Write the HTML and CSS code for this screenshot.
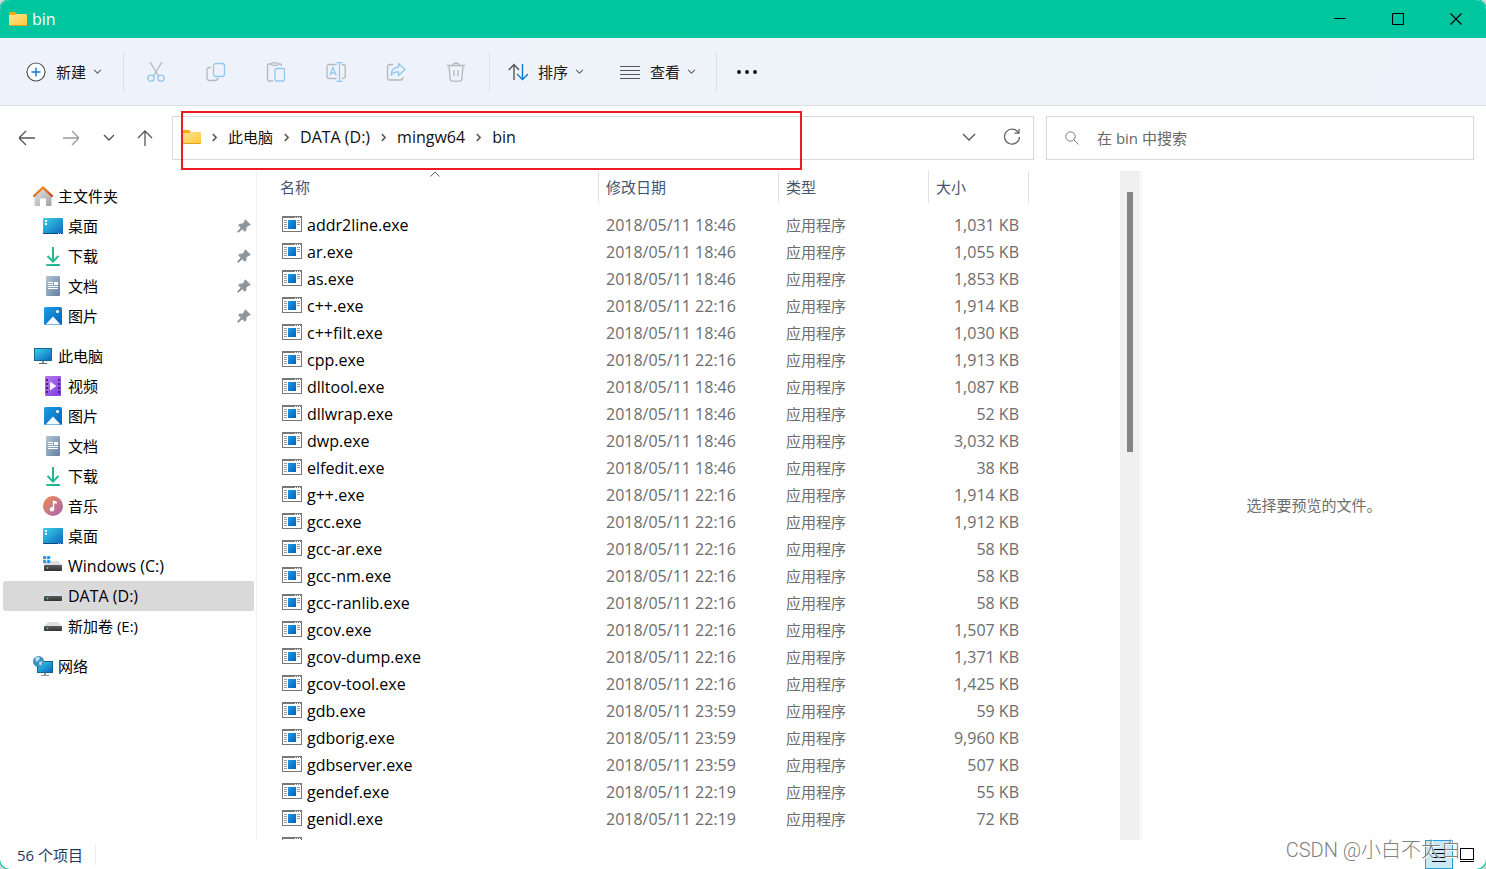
FILE: index.html
```html
<!DOCTYPE html>
<html lang="zh-CN">
<head>
<meta charset="utf-8">
<title>bin</title>
<link rel="stylesheet" href="styles.css">
</head>
<body>
<svg class="defs" width="0" height="0" aria-hidden="true">
  <defs>
    <linearGradient id="gFolder" x1="0" y1="0" x2="1" y2="1"><stop offset="0" stop-color="#ffe394"/><stop offset="1" stop-color="#ffc937"/></linearGradient>
    <linearGradient id="gDesk" x1="0" y1="0" x2="1" y2="1"><stop offset="0" stop-color="#37d3e6"/><stop offset="1" stop-color="#0b67c2"/></linearGradient>
    <linearGradient id="gPic" x1="0" y1="0" x2="1" y2="1"><stop offset="0" stop-color="#1ba0e6"/><stop offset="1" stop-color="#0560b8"/></linearGradient>
    <linearGradient id="gDoc" x1="0" y1="0" x2="1" y2="1"><stop offset="0" stop-color="#b3c5d9"/><stop offset="1" stop-color="#64819f"/></linearGradient>
    <linearGradient id="gDown" x1="0" y1="0" x2="1" y2="1"><stop offset="0" stop-color="#35d08a"/><stop offset="1" stop-color="#0b9aa0"/></linearGradient>
    <linearGradient id="gVid" x1="0" y1="0" x2="1" y2="1"><stop offset="0" stop-color="#b678f2"/><stop offset="1" stop-color="#7a3be0"/></linearGradient>
    <linearGradient id="gMus" x1="0" y1="0" x2="1" y2="1"><stop offset="0" stop-color="#f08a4e"/><stop offset="1" stop-color="#a566b5"/></linearGradient>
    <linearGradient id="gRoof" x1="0" y1="0" x2="1" y2="1"><stop offset="0" stop-color="#f79a1c"/><stop offset="1" stop-color="#cf4310"/></linearGradient>
    <linearGradient id="gWall" x1="0" y1="0" x2="1" y2="1"><stop offset="0" stop-color="#e6e6e6"/><stop offset="1" stop-color="#a2a2a2"/></linearGradient>
    <linearGradient id="gExe" x1="0" y1="0" x2="1" y2="1"><stop offset="0" stop-color="#1c9be6"/><stop offset="1" stop-color="#0560b8"/></linearGradient>
    <linearGradient id="gDrive" x1="0" y1="0" x2="0" y2="1"><stop offset="0" stop-color="#5c5c5c"/><stop offset="1" stop-color="#333"/></linearGradient>
  </defs>
  <symbol id="folder" viewBox="0 0 18 14"><path d="M0 1q0-1 1-1h5l2 2h-1v3H0z" fill="#f5ac12"/><path d="M0 3h6l1.500-1H17q1 0 1 1v10q0 1-1 1H1q-1 0-1-1z" fill="url(#gFolder)"/><path d="M0 13h18q0 1-1 1H1q-1 0-1-1z" fill="#e8a01c"/></symbol>
  <symbol id="home" viewBox="0 0 20 20"><path d="M1.500 10L10 2l8.500 8v9q0 1-1 1H13v-7.500H7V20H2.500q-1 0-1-1z" fill="url(#gWall)"/><path d="M1 10l9-8.500 9 8.500" fill="none" stroke="url(#gRoof)" stroke-width="2.400" stroke-linecap="round" stroke-linejoin="round"/></symbol>
  <symbol id="desktop" viewBox="0 0 20 20"><rect y="2" width="20" height="16" rx="1" fill="url(#gDesk)"/><path d="M0 17h20q0 1-1 1H1q-1 0-1-1z" fill="#0a4a86"/><path d="M2 4h2v2H2zM2 7h2v2H2z" fill="#fff"/><path d="M15 17h1v1h-1zM17 17h1v1h-1z" fill="#8fc4ee"/></symbol>
  <symbol id="download" viewBox="0 0 20 20"><path d="M10 1v14M4.500 10l5.500 5.500 5.500-5.500" fill="none" stroke="#24b894" stroke-width="2"/><rect x="3" y="18" width="14" height="2" rx="1" fill="url(#gDown)"/></symbol>
  <symbol id="doc" viewBox="0 0 20 20"><rect x="3" width="14" height="20" rx="1" fill="url(#gDoc)"/><path d="M5 6.500h5M5 8.500h5M5 10.500h10M5 12.500h10" stroke="#fff"/><path d="M11 6h4v3h-4z" fill="#fff"/></symbol>
  <symbol id="picture" viewBox="0 0 20 20"><rect x="1" y="1" width="18" height="18" rx="1.500" fill="url(#gPic)"/><path d="M2.500 18.500L10 10.500l7.500 8z" fill="#f3f9ff"/><circle cx="14.500" cy="5.500" r="1.600" fill="#fff"/></symbol>
  <symbol id="video" viewBox="0 0 20 20"><rect x="2" width="16" height="20" rx="1" fill="url(#gVid)"/><path d="M3 3h2v2H3zM3 7h2v2H3zM3 11h2v2H3zM3 15h2v2H3zM15 3h2v2h-2zM15 7h2v2h-2zM15 11h2v2h-2zM15 15h2v2h-2z" fill="#45247f"/><path d="M7 5.500L13.500 10 7 14.500z" fill="#f4ecff"/></symbol>
  <symbol id="music" viewBox="0 0 20 20"><circle cx="10" cy="10" r="10" fill="url(#gMus)"/><path d="M9.800 12.800V4.500l4 1v2.300l-2.600-.6v5.900z" fill="#fff"/><circle cx="9" cy="13.300" r="2.300" fill="#fff"/></symbol>
  <symbol id="pc" viewBox="0 0 20 20"><rect x="1" y="2" width="18" height="13" fill="#17649a"/><rect x="2" y="3" width="16" height="11" fill="url(#gDesk)"/><path d="M9 15h2v2H9z" fill="#8a949e"/><path d="M6 17h8v1H6z" fill="#5d6771"/></symbol>
  <symbol id="drive" viewBox="0 0 20 20"><path d="M1 10l4-4h10l4 4z" fill="#dcdfe3"/><rect x="1" y="10" width="18" height="5" rx=".8" fill="url(#gDrive)"/><circle cx="4.500" cy="12.500" r=".9" fill="#35e04e"/></symbol>
  <symbol id="windrive" viewBox="0 0 20 20"><path d="M1 9l4-4h10l4 4z" fill="#dcdfe3"/><rect x="1" y="9" width="18" height="6" rx=".8" fill="url(#gDrive)"/><circle cx="4.500" cy="12" r=".9" fill="#35e04e"/><path d="M0 0h3.300v3.300H0zM4 0h3.300v3.300H4zM0 4h3.300v3.300H0zM4 4h3.300v3.300H4z" fill="#1592e2" stroke="#fff" stroke-width=".3"/></symbol>
  <symbol id="network" viewBox="0 0 20 20"><rect x="4" y="5" width="16" height="12" fill="#17649a"/><rect x="5" y="6" width="14" height="10" fill="url(#gDesk)"/><path d="M11 17h2v2h-2z" fill="#8a949e"/><path d="M8 19h8v1H8z" fill="#8a949e"/><circle cx="5.500" cy="5.500" r="5.500" fill="#3b92bf"/><path d="M2 2q3-2.500 5 0l-1 2-3 2zM6 6l3.500-1-1 4-2 .5z" fill="#b9dcea"/></symbol>
  <symbol id="pin" viewBox="0 0 14 14"><path d="M8.300.8l4.900 4.900-1.400.8-.6-.1-2.300 2.300.1 2.600-1.200 1L5.200 9.700 1.700 13l-.9.100.1-.9 3.400-3.400L1.600 6.200l1.100-1.100 2.600.1 2.300-2.300-.1-.7z" fill="#8d959d" stroke="#8d959d" stroke-linejoin="round"/></symbol>
  <symbol id="exe" viewBox="0 0 20 16"><rect x=".5" y=".5" width="19" height="15" fill="#fff" stroke="#777"/><path d="M0 0h20v2H0z" fill="#777"/><path d="M13 1.500h1M15 1.500h1M17 1.500h1" stroke="#fff"/><path d="M2 4.500h3M2 6.500h3M2 8.500h3M2 10.500h3M2 12.500h3M15 4.500h3M15 6.500h3M15 8.500h3" stroke="#999"/><rect x="6" y="4" width="8" height="9" fill="url(#gExe)"/></symbol>
  <symbol id="chev" viewBox="0 0 8 8"><path d="M1 2.500l3 3 3-3" fill="none" stroke="#666"/></symbol>
  <symbol id="sep" viewBox="0 0 8 8"><path d="M2.500 1l3 3-3 3" fill="none" stroke="#555" stroke-width="1.300"/></symbol>
</svg>

<div class="window">
  <header class="titlebar">
    <svg class="folder"><use href="#folder"/></svg>
    <h1 class="title">bin</h1>
    <button class="winbtn" aria-label="最小化"><svg width="12" height="12"><path d="M0 5.500h12" stroke="#000"/></svg></button>
    <button class="winbtn" aria-label="最大化"><svg width="12" height="12"><rect x=".5" y=".5" width="11" height="11" rx="1" fill="none" stroke="#000" stroke-width="1.200"/></svg></button>
    <button class="winbtn" aria-label="关闭"><svg width="12" height="12"><path d="M.5.5l11 11M11.500.5l-11 11" stroke="#000" stroke-width="1.200"/></svg></button>
  </header>

  <div class="toolbar">
    <button class="tool new"><svg width="20" height="20" fill="none"><circle cx="10" cy="10" r="9" fill="#fff" stroke="#555" stroke-width="1.200"/><path d="M10 5.500v9M5.500 10h9" stroke="#0a78d4" stroke-width="1.400"/></svg>新建<svg class="chev"><use href="#chev"/></svg></button>
    <span class="divider"></span>
    <div class="actions">
      <button class="act" aria-label="剪切"><svg width="20" height="20" fill="none"><path d="M4 0l8.500 14M16 0L7.500 14" stroke="#b5b8bc" stroke-width="1.300"/><circle cx="5" cy="16.200" r="3.100" stroke="#93c8ee" stroke-width="1.300"/><circle cx="15" cy="16.200" r="3.100" stroke="#93c8ee" stroke-width="1.300"/></svg></button>
      <button class="act" aria-label="复制"><svg width="20" height="20" fill="none"><path d="M5 5.500H3.500q-2.500 0-2.500 3V16q0 2.500 2.500 2.500H9q2.500 0 3-2.500" stroke="#b5b8bc" stroke-width="1.300"/><rect x="7.500" y="1.500" width="11" height="13" rx="2.500" stroke="#93c8ee" stroke-width="1.300"/></svg></button>
      <button class="act" aria-label="粘贴"><svg width="20" height="20" fill="none"><path d="M5 2H3Q1.500 2 1.500 3.500v14Q1.500 19 3 19h4M12 2h2q1.500 0 1.500 1.500V4" stroke="#b5b8bc" stroke-width="1.300"/><rect x="5.500" y=".8" width="6.500" height="2.500" rx="1.200" stroke="#b5b8bc" stroke-width="1.200"/><rect x="9" y="6.500" width="9.500" height="12.500" rx="1.500" stroke="#93c8ee" stroke-width="1.300"/></svg></button>
      <button class="act" aria-label="重命名"><svg width="20" height="20" fill="none"><path d="M10.500 2.500H3.500Q1 2.500 1 5v9q0 2.500 2.500 2.500h7M16 2.500q3.300 0 3.300 2.500v9q0 2.500-3.300 2.500" stroke="#b5b8bc" stroke-width="1.300"/><path d="M3.800 13.500L7 5.500l3.200 8M4.800 11h4.400M13.500.6v18.800M10.500.6h6M10.500 19.400h6" stroke="#93c8ee" stroke-width="1.300"/></svg></button>
      <button class="act" aria-label="共享"><svg width="20" height="20" fill="none"><path d="M7 2.500H4Q1.500 2.500 1.500 5v10.500Q1.500 18 4 18h10.500q2.500 0 2.500-3" stroke="#b5b8bc" stroke-width="1.300"/><path d="M12.500 1.500l6.500 6-6.500 6V10Q7.500 9.500 5 13q.5-7.500 7.500-8z" stroke="#93c8ee" stroke-width="1.300" stroke-linejoin="round"/></svg></button>
      <button class="act" aria-label="删除"><svg width="20" height="20" fill="none"><path d="M1 3.500h18M7 3.500Q7.200 1 10 1t3 2.500M3 3.500l1.200 14q.2 1.700 2 1.700h7.600q1.800 0 2-1.700L17 3.500M8 8v6.500M12 8v6.500" stroke="#b5b8bc" stroke-width="1.300"/></svg></button>
    </div>
    <span class="divider"></span>
    <button class="tool sort"><svg width="20" height="20" fill="none"><path d="M6 18V2.500M.7 8L6 2.500 11 8" stroke="#555" stroke-width="1.400"/><path d="M14.500 2v15.500M9 12l5.500 5.500L20 12" stroke="#0a78d4" stroke-width="1.400"/></svg>排序<svg class="chev"><use href="#chev"/></svg></button>
    <button class="tool view"><svg width="20" height="20"><path d="M0 4.500h20M0 8.500h20M0 12.500h20M0 16.500h20" stroke="#555"/></svg>查看<svg class="chev"><use href="#chev"/></svg></button>
    <span class="divider"></span>
    <button class="more" aria-label="更多"><svg width="20" height="4"><circle cx="2" cy="2" r="1.900"/><circle cx="10" cy="2" r="1.900"/><circle cx="18" cy="2" r="1.900"/></svg></button>
  </div>

  <nav class="navrow" aria-label="地址">
    <div class="history">
      <button class="nav back" aria-label="后退"><svg width="16" height="16" fill="none"><path d="M0 8h16M7 1L0 8l7 7" stroke="#555" stroke-width="1.300"/></svg></button>
      <button class="nav forward" aria-label="前进"><svg width="16" height="16" fill="none"><path d="M0 8h16M9 1l7 7-7 7" stroke="#999" stroke-width="1.300"/></svg></button>
      <button class="nav recent" aria-label="最近浏览的位置"><svg width="12" height="8" fill="none"><path d="M1 1l5 5 5-5" stroke="#555" stroke-width="1.400"/></svg></button>
      <button class="nav up" aria-label="向上"><svg width="16" height="16" fill="none"><path d="M8 16V1M1 8l7-7 7 7" stroke="#555" stroke-width="1.300"/></svg></button>
    </div>
    <div class="address">
      <svg class="folder"><use href="#folder"/></svg>
      <svg class="sep"><use href="#sep"/></svg><a href="#">此电脑</a>
      <svg class="sep"><use href="#sep"/></svg><a class="latin" href="#">DATA (D:)</a>
      <svg class="sep"><use href="#sep"/></svg><a class="latin" href="#">mingw64</a>
      <svg class="sep"><use href="#sep"/></svg><a class="latin" href="#">bin</a>
      <button class="addrbtn first" aria-label="以前的位置"><svg width="14" height="8" fill="none"><path d="M1 1l6 6 6-6" stroke="#555" stroke-width="1.300"/></svg></button>
      <button class="addrbtn" aria-label="刷新"><svg width="18" height="18" fill="none"><path d="M15.500 4.800A7.500 7.500 0 1 0 16.500 9M16 1v4.200h-4.500" stroke="#666" stroke-width="1.300"/></svg></button>
      <span class="highlight"></span>
    </div>
    <label class="search">
      <svg width="14" height="14" fill="none"><circle cx="5.500" cy="5.500" r="4.700" stroke="#777"/><path d="M9 9l4.500 4.500" stroke="#777"/></svg>
      <input type="text" placeholder="在 bin 中搜索" aria-label="在 bin 中搜索">
    </label>
  </nav>

  <div class="content">
    <aside class="sidebar">
      <ul class="group">
        <li class="item root"><svg class="ico"><use href="#home"/></svg>主文件夹</li>
        <li class="item"><svg class="ico"><use href="#desktop"/></svg>桌面<svg class="pin"><use href="#pin"/></svg></li>
        <li class="item"><svg class="ico"><use href="#download"/></svg>下载<svg class="pin"><use href="#pin"/></svg></li>
        <li class="item"><svg class="ico"><use href="#doc"/></svg>文档<svg class="pin"><use href="#pin"/></svg></li>
        <li class="item"><svg class="ico"><use href="#picture"/></svg>图片<svg class="pin"><use href="#pin"/></svg></li>
      </ul>
      <ul class="group">
        <li class="item root"><svg class="ico"><use href="#pc"/></svg>此电脑</li>
        <li class="item"><svg class="ico"><use href="#video"/></svg>视频</li>
        <li class="item"><svg class="ico"><use href="#picture"/></svg>图片</li>
        <li class="item"><svg class="ico"><use href="#doc"/></svg>文档</li>
        <li class="item"><svg class="ico"><use href="#download"/></svg>下载</li>
        <li class="item"><svg class="ico"><use href="#music"/></svg>音乐</li>
        <li class="item"><svg class="ico"><use href="#desktop"/></svg>桌面</li>
        <li class="item latin"><svg class="ico"><use href="#windrive"/></svg>Windows (C:)</li>
        <li class="item latin selected"><svg class="ico"><use href="#drive"/></svg>DATA (D:)</li>
        <li class="item"><svg class="ico"><use href="#drive"/></svg>新加卷 (E:)</li>
      </ul>
      <ul class="group">
        <li class="item root"><svg class="ico"><use href="#network"/></svg>网络</li>
      </ul>
    </aside>

    <main class="files">
      <table>
        <colgroup><col class="c-name"><col class="c-date"><col class="c-type"><col class="c-size"></colgroup>
        <thead><tr><th>名称<svg class="caret" width="10" height="6" fill="none"><path d="M.5 5.500L5 1l4.500 4.500" stroke="#666"/></svg></th><th>修改日期</th><th>类型</th><th>大小</th></tr></thead>
        <tbody>
          <tr><td><svg class="exe"><use href="#exe"/></svg>addr2line.exe</td><td>2018/05/11 18:46</td><td class="type">应用程序</td><td>1,031 KB</td></tr>
          <tr><td><svg class="exe"><use href="#exe"/></svg>ar.exe</td><td>2018/05/11 18:46</td><td class="type">应用程序</td><td>1,055 KB</td></tr>
          <tr><td><svg class="exe"><use href="#exe"/></svg>as.exe</td><td>2018/05/11 18:46</td><td class="type">应用程序</td><td>1,853 KB</td></tr>
          <tr><td><svg class="exe"><use href="#exe"/></svg>c++.exe</td><td>2018/05/11 22:16</td><td class="type">应用程序</td><td>1,914 KB</td></tr>
          <tr><td><svg class="exe"><use href="#exe"/></svg>c++filt.exe</td><td>2018/05/11 18:46</td><td class="type">应用程序</td><td>1,030 KB</td></tr>
          <tr><td><svg class="exe"><use href="#exe"/></svg>cpp.exe</td><td>2018/05/11 22:16</td><td class="type">应用程序</td><td>1,913 KB</td></tr>
          <tr><td><svg class="exe"><use href="#exe"/></svg>dlltool.exe</td><td>2018/05/11 18:46</td><td class="type">应用程序</td><td>1,087 KB</td></tr>
          <tr><td><svg class="exe"><use href="#exe"/></svg>dllwrap.exe</td><td>2018/05/11 18:46</td><td class="type">应用程序</td><td>52 KB</td></tr>
          <tr><td><svg class="exe"><use href="#exe"/></svg>dwp.exe</td><td>2018/05/11 18:46</td><td class="type">应用程序</td><td>3,032 KB</td></tr>
          <tr><td><svg class="exe"><use href="#exe"/></svg>elfedit.exe</td><td>2018/05/11 18:46</td><td class="type">应用程序</td><td>38 KB</td></tr>
          <tr><td><svg class="exe"><use href="#exe"/></svg>g++.exe</td><td>2018/05/11 22:16</td><td class="type">应用程序</td><td>1,914 KB</td></tr>
          <tr><td><svg class="exe"><use href="#exe"/></svg>gcc.exe</td><td>2018/05/11 22:16</td><td class="type">应用程序</td><td>1,912 KB</td></tr>
          <tr><td><svg class="exe"><use href="#exe"/></svg>gcc-ar.exe</td><td>2018/05/11 22:16</td><td class="type">应用程序</td><td>58 KB</td></tr>
          <tr><td><svg class="exe"><use href="#exe"/></svg>gcc-nm.exe</td><td>2018/05/11 22:16</td><td class="type">应用程序</td><td>58 KB</td></tr>
          <tr><td><svg class="exe"><use href="#exe"/></svg>gcc-ranlib.exe</td><td>2018/05/11 22:16</td><td class="type">应用程序</td><td>58 KB</td></tr>
          <tr><td><svg class="exe"><use href="#exe"/></svg>gcov.exe</td><td>2018/05/11 22:16</td><td class="type">应用程序</td><td>1,507 KB</td></tr>
          <tr><td><svg class="exe"><use href="#exe"/></svg>gcov-dump.exe</td><td>2018/05/11 22:16</td><td class="type">应用程序</td><td>1,371 KB</td></tr>
          <tr><td><svg class="exe"><use href="#exe"/></svg>gcov-tool.exe</td><td>2018/05/11 22:16</td><td class="type">应用程序</td><td>1,425 KB</td></tr>
          <tr><td><svg class="exe"><use href="#exe"/></svg>gdb.exe</td><td>2018/05/11 23:59</td><td class="type">应用程序</td><td>59 KB</td></tr>
          <tr><td><svg class="exe"><use href="#exe"/></svg>gdborig.exe</td><td>2018/05/11 23:59</td><td class="type">应用程序</td><td>9,960 KB</td></tr>
          <tr><td><svg class="exe"><use href="#exe"/></svg>gdbserver.exe</td><td>2018/05/11 23:59</td><td class="type">应用程序</td><td>507 KB</td></tr>
          <tr><td><svg class="exe"><use href="#exe"/></svg>gendef.exe</td><td>2018/05/11 22:19</td><td class="type">应用程序</td><td>55 KB</td></tr>
          <tr><td><svg class="exe"><use href="#exe"/></svg>genidl.exe</td><td>2018/05/11 22:19</td><td class="type">应用程序</td><td>72 KB</td></tr>
          <tr><td><svg class="exe"><use href="#exe"/></svg></td><td></td><td></td><td></td></tr>
        </tbody>
      </table>
    </main>
    <div class="scrollbar"><div class="thumb"></div></div>
    <section class="preview">选择要预览的文件。</section>
  </div>

  <footer class="status">
    <span class="count">56 个项目</span>
    <button class="mode active" aria-label="详细信息"><svg width="14" height="16"><path d="M0 2.500h14M0 6.500h14M0 10.500h14M0 14.500h14" stroke="#000"/></svg></button>
    <button class="mode" aria-label="大图标"><svg width="14" height="16" fill="none"><rect x=".5" y="1.500" width="13" height="11" stroke="#000"/><path d="M0 14.500h14" stroke="#000"/></svg></button>
    <span class="watermark">CSDN @小白不太白</span>
  </footer>
</div>
</body>
</html>
```
FILE: styles.css
```css
* { box-sizing: border-box; }

body {
  margin: 0;
  background: #d4d6d6;
  color: #000;
  font: 15px/20px "Open Sans", "Noto Sans CJK SC", sans-serif;
}

button {
  display: flex;
  align-items: center;
  justify-content: center;
  padding: 0;
  border: 0;
  background: none;
  color: inherit;
  font: inherit;
}

svg { display: block; flex: none; }
.defs { position: absolute; }
.folder { width: 18px; height: 14px; }
.latin { font-size: 16px; }

.window {
  display: flex;
  flex-direction: column;
  height: 100vh;
  overflow: hidden;
  border-radius: 10px;
  background: #fff;
  box-shadow: 0 0 0 1px #00c6a0;
}

/* title bar */
.titlebar {
  display: flex;
  align-items: center;
  height: 38px;
  padding: 0 1px 0 9px;
  background: #00c6a0;
}
.title { flex: 1; margin: 0 0 0 5px; color: #fff; font-size: 16px; font-weight: 400; }
.winbtn { width: 58px; height: 38px; }

/* command bar */
.toolbar {
  display: flex;
  align-items: center;
  height: 68px;
  border-bottom: 1px solid #dadfe3;
  background: linear-gradient(100deg, #eef3fb 30%, #eef3f7 55%, #eef3f7 90%, #eef3fb 94%);
  color: #1a1a1a;
}
.tool { gap: 10px; height: 44px; }
.new { padding: 0 21px 0 26px; }
.sort { padding: 0 18px; }
.view { padding: 0 20px 0 18px; }
.more { padding: 0 20px; height: 44px; }
.chev { width: 9px; height: 9px; margin-left: -3px; }
.divider { width: 1px; height: 40px; background: #dde1e6; }
.actions { display: flex; padding: 0 3px 0 2px; }
.act { width: 60px; height: 44px; }

/* address row */
.navrow { display: flex; height: 65px; padding: 10px 12px 11px; }
.history { display: flex; align-items: center; width: 160px; }
.nav { height: 32px; }
.back { width: 30px; }
.forward { width: 58px; }
.recent { width: 18px; }
.up { width: 54px; }
.address {
  position: relative;
  display: flex;
  flex: 1;
  align-items: center;
  padding: 0 0 2px 10px;
  border: 1px solid #d9d9d9;
}
.address a { color: #111; text-decoration: none; }
.sep { width: 9px; height: 9px; margin: 0 9px; }
.addrbtn { width: 43px; height: 40px; }
.addrbtn.first { margin-left: auto; }
.highlight {
  position: absolute;
  top: -6px;
  left: 8px;
  width: 621px;
  height: 59px;
  border: 2px solid #ed1c24;
  pointer-events: none;
}
.search {
  display: flex;
  align-items: center;
  gap: 18px;
  width: 428px;
  margin-left: 12px;
  padding: 0 18px;
  border: 1px solid #d9d9d9;
}
.search input {
  flex: 1;
  min-width: 0;
  padding: 0;
  border: 0;
  outline: 0;
  background: none;
  font: inherit;
}
.search input::placeholder { color: #666; opacity: 1; }

/* panes */
.content { display: flex; flex: 1; min-height: 0; }
.sidebar {
  width: 257px;
  padding: 10px 2px 0 3px;
  border-right: 1px solid #f3f3f3;
  overflow: hidden;
}
.group { margin: 0 0 10px; padding: 0; list-style: none; }
.item {
  display: flex;
  align-items: center;
  gap: 5px;
  height: 30px;
  padding: 0 3px 0 40px;
  border-radius: 2px;
}
.item.root { padding-left: 30px; }
.item.selected { background: #d9d9d9; }
.ico { width: 20px; height: 20px; }
.pin { width: 14px; height: 14px; margin-left: auto; }

.files { width: 863px; padding-left: 15px; overflow: hidden; }
table { width: 757px; table-layout: fixed; border-collapse: separate; border-spacing: 0; }
.c-name { width: 327px; }
.c-date { width: 180px; }
.c-type { width: 150px; }
.c-size { width: 100px; }
th {
  position: relative;
  height: 32px;
  padding: 0 7px;
  border-right: 1px solid #e2e2e2;
  color: #44546f;
  font-weight: 400;
  text-align: left;
}
th:first-child { padding-left: 8px; }
.caret { position: absolute; top: 0; left: 50%; margin-left: -5px; }
tbody::before { content: ""; display: block; height: 8px; }
td { height: 27px; padding: 0 7px; color: #6d6d6d; font-size: 16px; white-space: nowrap; }
td.type { font-size: 15px; }
td:first-child { padding-left: 10px; color: #000; }
td:last-child { padding-right: 10px; text-align: right; }
.exe { display: inline-block; width: 20px; height: 16px; margin-right: 5px; vertical-align: -1px; }

.scrollbar { width: 20px; padding: 21px 7px 0; background: #f0f0f0; }
.thumb { width: 6px; height: 260px; background: #858585; }
.preview {
  display: flex;
  flex: 1;
  align-items: center;
  justify-content: center;
  margin-left: 1px;
  padding-bottom: 2px;
  border-left: 1px solid #f3f3f3;
  color: #6d6d6d;
}

/* status bar */
.status { position: relative; display: flex; align-items: center; height: 29px; padding: 0 5px 0 17px; }
.count { margin-right: auto; padding-right: 12px; border-right: 1px solid #eee; color: #1e395b; }
.mode { width: 28px; height: 29px; }
.mode.active { border: 1px solid #26a0da; background: #cbe8f6; }
.watermark {
  position: absolute;
  right: 25px;
  top: -4px;
  color: #808080;
  font: 300 20px/28px Roboto, "Noto Sans CJK SC", sans-serif;
  text-shadow: 1px 1px 0 #fff;
}
```
